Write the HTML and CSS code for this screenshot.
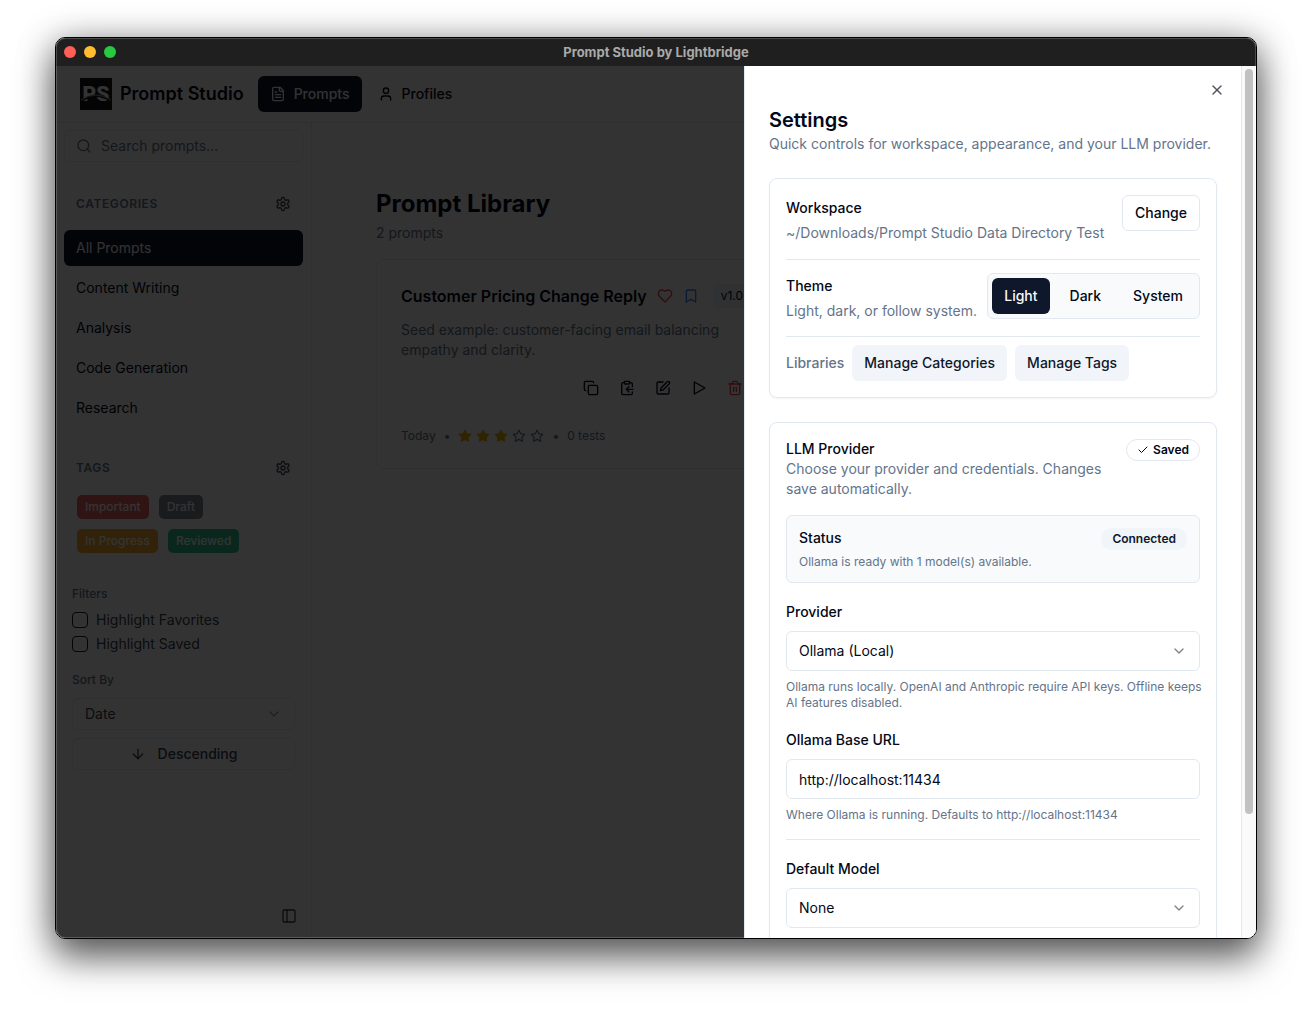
FILE: index.html
```
<!DOCTYPE html>
<html lang="en">
<head>
  <meta charset="UTF-8">
  <title>Prompt Studio by Lightbridge</title>
  <link rel="stylesheet" href="styles.css">
</head>
<body>

  <div class="window">
    <div class="titlebar">
      <div class="lights">
        <span class="light red"></span>
        <span class="light yellow"></span>
        <span class="light green"></span>
      </div>
      <div class="window-title">Prompt Studio by Lightbridge</div>
    </div>

    <div class="content">
      <div class="app">
        <header class="header">
          <svg class="logo" viewBox="0 0 32 32">
            <rect width="32" height="32" fill="#181818"/>
            <text x="16" y="23" text-anchor="middle">PS</text>
            <path d="M1 23 Q16 13 31 23" fill="none" stroke="#181818" stroke-width="2"/>
            <path d="M1 22 Q16 12 31 22" fill="none" stroke="#9aa6ad" stroke-width="1"/>
          </svg>
          <h1>Prompt Studio</h1>
          <nav class="nav">
            <button class="nav-btn active">
              <svg class="icon" viewBox="0 0 24 24"><path d="M15 2H6a2 2 0 0 0-2 2v16a2 2 0 0 0 2 2h12a2 2 0 0 0 2-2V7Z"/><path d="M14 2v4a2 2 0 0 0 2 2h4"/><path d="M10 9H8"/><path d="M16 13H8"/><path d="M16 17H8"/></svg>
              Prompts
            </button>
            <button class="nav-btn">
              <svg class="icon" viewBox="0 0 24 24"><path d="M19 21v-2a4 4 0 0 0-4-4H9a4 4 0 0 0-4 4v2"/><circle cx="12" cy="7" r="4"/></svg>
              Profiles
            </button>
          </nav>
        </header>

        <div class="columns">
          <aside class="sidebar">
            <label class="search">
              <svg class="icon" viewBox="0 0 24 24"><circle cx="11" cy="11" r="8"/><path d="m21 21-4.3-4.3"/></svg>
              <input type="text" placeholder="Search prompts..." aria-label="Search prompts">
            </label>

            <div class="side-head">
              <h2>Categories</h2>
              <button class="gear" aria-label="Manage categories">
                <svg class="icon" viewBox="0 0 24 24"><path d="M12.22 2h-.44a2 2 0 0 0-2 2v.18a2 2 0 0 1-1 1.73l-.43.25a2 2 0 0 1-2 0l-.15-.08a2 2 0 0 0-2.73.73l-.22.38a2 2 0 0 0 .73 2.73l.15.1a2 2 0 0 1 1 1.72v.51a2 2 0 0 1-1 1.74l-.15.09a2 2 0 0 0-.73 2.73l.22.38a2 2 0 0 0 2.73.73l.15-.08a2 2 0 0 1 2 0l.43.25a2 2 0 0 1 1 1.73V20a2 2 0 0 0 2 2h.44a2 2 0 0 0 2-2v-.18a2 2 0 0 1 1-1.73l.43-.25a2 2 0 0 1 2 0l.15.08a2 2 0 0 0 2.73-.73l.22-.39a2 2 0 0 0-.73-2.73l-.15-.08a2 2 0 0 1-1-1.74v-.5a2 2 0 0 1 1-1.74l.15-.09a2 2 0 0 0 .73-2.73l-.22-.38a2 2 0 0 0-2.73-.73l-.15.08a2 2 0 0 1-2 0l-.43-.25a2 2 0 0 1-1-1.73V4a2 2 0 0 0-2-2z"/><circle cx="12" cy="12" r="3"/></svg>
              </button>
            </div>
            <div class="categories">
              <button class="category active">All Prompts</button>
              <button class="category">Content Writing</button>
              <button class="category">Analysis</button>
              <button class="category">Code Generation</button>
              <button class="category">Research</button>
            </div>

            <div class="side-head">
              <h2>Tags</h2>
              <button class="gear" aria-label="Manage tags">
                <svg class="icon" viewBox="0 0 24 24"><path d="M12.22 2h-.44a2 2 0 0 0-2 2v.18a2 2 0 0 1-1 1.73l-.43.25a2 2 0 0 1-2 0l-.15-.08a2 2 0 0 0-2.73.73l-.22.38a2 2 0 0 0 .73 2.73l.15.1a2 2 0 0 1 1 1.72v.51a2 2 0 0 1-1 1.74l-.15.09a2 2 0 0 0-.73 2.73l.22.38a2 2 0 0 0 2.73.73l.15-.08a2 2 0 0 1 2 0l.43.25a2 2 0 0 1 1 1.73V20a2 2 0 0 0 2 2h.44a2 2 0 0 0 2-2v-.18a2 2 0 0 1 1-1.73l.43-.25a2 2 0 0 1 2 0l.15.08a2 2 0 0 0 2.73-.73l.22-.39a2 2 0 0 0-.73-2.73l-.15-.08a2 2 0 0 1-1-1.74v-.5a2 2 0 0 1 1-1.74l.15-.09a2 2 0 0 0 .73-2.73l-.22-.38a2 2 0 0 0-2.73-.73l-.15.08a2 2 0 0 1-2 0l-.43-.25a2 2 0 0 1-1-1.73V4a2 2 0 0 0-2-2z"/><circle cx="12" cy="12" r="3"/></svg>
              </button>
            </div>
            <div class="tags">
              <button class="tag tag-red">Important</button>
              <button class="tag tag-gray">Draft</button>
              <button class="tag tag-amber">In Progress</button>
              <button class="tag tag-green">Reviewed</button>
            </div>

            <div class="filters">
              <h3>Filters</h3>
              <label class="check"><input type="checkbox"> Highlight Favorites</label>
              <label class="check"><input type="checkbox"> Highlight Saved</label>
            </div>

            <div class="sort">
              <label class="small-label" for="sort">Sort By</label>
              <div class="select small">
                <select id="sort"><option>Date</option></select>
                <svg class="icon" viewBox="0 0 24 24"><path d="m6 9 6 6 6-6"/></svg>
              </div>
              <button class="order">
                <svg class="icon" viewBox="0 0 24 24"><path d="M12 5v14"/><path d="m19 12-7 7-7-7"/></svg>
                Descending
              </button>
            </div>

            <button class="collapse" aria-label="Collapse sidebar">
              <svg class="icon" viewBox="0 0 24 24"><rect width="18" height="18" x="3" y="3" rx="2"/><path d="M9 3v18"/></svg>
            </button>
          </aside>

          <main class="main">
            <h2>Prompt Library</h2>
            <p class="count">2 prompts</p>
            <div class="cards">
              <article class="prompt">
                <div class="prompt-head">
                  <h3>Customer Pricing Change Reply</h3>
                  <svg class="icon heart" viewBox="0 0 24 24"><path d="M19 14c1.49-1.46 3-3.21 3-5.5A5.5 5.5 0 0 0 16.5 3c-1.76 0-3 .5-4.5 2-1.5-1.5-2.74-2-4.5-2A5.5 5.5 0 0 0 2 8.5c0 2.3 1.5 4.05 3 5.5l7 7Z"/></svg>
                  <svg class="icon bookmark" viewBox="0 0 24 24"><path d="m19 21-7-4-7 4V5a2 2 0 0 1 2-2h10a2 2 0 0 1 2 2v16z"/></svg>
                  <span class="version">v1.0</span>
                </div>
                <p class="desc">Seed example: customer-facing email balancing empathy and clarity.</p>
                <div class="actions">
                  <button aria-label="Copy"><svg class="icon" viewBox="0 0 24 24"><rect width="14" height="14" x="8" y="8" rx="2"/><path d="M4 16c-1.1 0-2-.9-2-2V4c0-1.1.9-2 2-2h10c1.1 0 2 .9 2 2"/></svg></button>
                  <button aria-label="Paste"><svg class="icon" viewBox="0 0 24 24"><rect width="8" height="4" x="8" y="2" rx="1"/><path d="M8 4H6a2 2 0 0 0-2 2v14a2 2 0 0 0 2 2h12a2 2 0 0 0 2-2v-2"/><path d="M16 4h2a2 2 0 0 1 2 2v4"/><path d="M21 14H11"/><path d="m15 10-4 4 4 4"/></svg></button>
                  <button aria-label="Edit"><svg class="icon" viewBox="0 0 24 24"><path d="M12 3H5a2 2 0 0 0-2 2v14a2 2 0 0 0 2 2h14a2 2 0 0 0 2-2v-7"/><path d="M18.375 2.625a2.121 2.121 0 1 1 3 3L12 15l-4 1 1-4Z"/></svg></button>
                  <button aria-label="Run"><svg class="icon" viewBox="0 0 24 24"><path d="M5 3l16 9-16 9Z"/></svg></button>
                  <button class="delete" aria-label="Delete"><svg class="icon" viewBox="0 0 24 24"><path d="M3 6h18"/><path d="M19 6v14c0 1-1 2-2 2H7c-1 0-2-1-2-2V6"/><path d="M8 6V4c0-1 1-2 2-2h4c1 0 2 1 2 2v2"/><path d="M10 11v6"/><path d="M14 11v6"/></svg></button>
                </div>
                <div class="meta">
                  <span>Today</span>
                  <span>•</span>
                  <span class="stars">
                    <svg class="star on" viewBox="0 0 24 24"><path d="M12 2l3.09 6.26L22 9.27l-5 4.87 1.18 6.88L12 17.77l-6.18 3.25L7 14.14 2 9.27l6.91-1.01z"/></svg>
                    <svg class="star on" viewBox="0 0 24 24"><path d="M12 2l3.09 6.26L22 9.27l-5 4.87 1.18 6.88L12 17.77l-6.18 3.25L7 14.14 2 9.27l6.91-1.01z"/></svg>
                    <svg class="star on" viewBox="0 0 24 24"><path d="M12 2l3.09 6.26L22 9.27l-5 4.87 1.18 6.88L12 17.77l-6.18 3.25L7 14.14 2 9.27l6.91-1.01z"/></svg>
                    <svg class="star" viewBox="0 0 24 24"><path d="M12 2l3.09 6.26L22 9.27l-5 4.87 1.18 6.88L12 17.77l-6.18 3.25L7 14.14 2 9.27l6.91-1.01z"/></svg>
                    <svg class="star" viewBox="0 0 24 24"><path d="M12 2l3.09 6.26L22 9.27l-5 4.87 1.18 6.88L12 17.77l-6.18 3.25L7 14.14 2 9.27l6.91-1.01z"/></svg>
                  </span>
                  <span>•</span>
                  <span>0 tests</span>
                </div>
              </article>
            </div>
          </main>
        </div>
      </div>

      <div class="overlay"></div>

      <section class="sheet" role="dialog" aria-labelledby="settings-title">
        <div class="sheet-body">
          <button class="close" aria-label="Close">
            <svg class="icon" viewBox="0 0 24 24"><path d="M18 6 6 18"/><path d="m6 6 12 12"/></svg>
          </button>
          <h2 id="settings-title">Settings</h2>
          <p class="muted">Quick controls for workspace, appearance, and your LLM provider.</p>

          <div class="panel general">
            <div class="row workspace">
              <div class="stack">
                <h3>Workspace</h3>
                <p class="muted">~/Downloads/Prompt Studio Data Directory Test</p>
              </div>
              <button class="btn outline">Change</button>
            </div>
            <div class="row theme">
              <div class="stack">
                <h3>Theme</h3>
                <p class="muted">Light, dark, or follow system.</p>
              </div>
              <div class="segment">
                <button class="btn primary">Light</button>
                <button class="btn">Dark</button>
                <button class="btn">System</button>
              </div>
            </div>
            <div class="libraries">
              <span class="muted medium">Libraries</span>
              <button class="btn secondary">Manage Categories</button>
              <button class="btn secondary">Manage Tags</button>
            </div>
          </div>

          <div class="panel provider">
            <div class="row">
              <div>
                <h3>LLM Provider</h3>
                <p class="muted">Choose your provider and credentials. Changes save automatically.</p>
              </div>
              <span class="badge saved">
                <svg class="icon" viewBox="0 0 24 24"><path d="M20 6 9 17l-5-5"/></svg>
                Saved
              </span>
            </div>

            <div class="status">
              <div class="row">
                <h3>Status</h3>
                <span class="badge connected">Connected</span>
              </div>
              <p class="hint">Ollama is ready with 1 model(s) available.</p>
            </div>

            <div class="field">
              <label for="provider">Provider</label>
              <div class="select">
                <select id="provider"><option>Ollama (Local)</option></select>
                <svg class="icon" viewBox="0 0 24 24"><path d="m6 9 6 6 6-6"/></svg>
              </div>
              <p class="hint one-line">Ollama runs locally. OpenAI and Anthropic require API keys. Offline keeps<br>AI features disabled.</p>
            </div>

            <div class="field">
              <label for="base-url">Ollama Base URL</label>
              <input type="text" id="base-url" value="http://localhost:11434">
              <p class="hint">Where Ollama is running. Defaults to http://localhost:11434</p>
            </div>

            <div class="field model">
              <label for="model">Default Model</label>
              <div class="select">
                <select id="model"><option>None</option></select>
                <svg class="icon" viewBox="0 0 24 24"><path d="m6 9 6 6 6-6"/></svg>
              </div>
            </div>
          </div>
        </div>
        <div class="scrollbar"><div class="thumb"></div></div>
      </section>
    </div>
  </div>

</body>
</html>
```

FILE: styles.css
```
* { box-sizing: border-box; margin: 0; }
body {
  height: 100vh;
  padding: 37px 55px 73px;
  display: flex;
  overflow: hidden;
  background: #fff;
  color: #020817;
  font: 14px/20px Inter, "Liberation Sans", sans-serif;
}
button, input, select { font: inherit; color: inherit; background: none; border: 0; padding: 0; }
h3 { font-size: 14px; font-weight: 500; }

.icon { width: 16px; height: 16px; flex: none; fill: none; stroke: currentColor; stroke-width: 2; stroke-linecap: round; stroke-linejoin: round; }

/* window frame */
.window {
  flex: 1;
  min-width: 0;
  position: relative;
  display: flex;
  flex-direction: column;
  border: 1px solid #000;
  border-radius: 10px;
  overflow: hidden;
  box-shadow: 0 20px 36px rgba(0, 0, 0, .5), 0 4px 36px rgba(0, 0, 0, .4);
}
.window::after { content: ""; position: absolute; inset: 0; border-radius: 9px; box-shadow: inset 0 0 0 1px rgba(255, 255, 255, .2); pointer-events: none; }
.titlebar { height: 28px; display: grid; grid-template-columns: 1fr auto 1fr; align-items: center; padding: 0 8px; background: #1f1f1f; }
.lights { display: flex; gap: 8px; }
.light { width: 12px; height: 12px; border-radius: 50%; }
.red { background: #ff5f57; }
.yellow { background: #febc2e; }
.green { background: #28c840; }
.window-title { color: #a9a9a9; font-size: 13px; font-weight: 700; }
.content { flex: 1; min-height: 0; position: relative; }
.app { height: 100%; display: flex; flex-direction: column; overflow: hidden; }

/* header */
.header { display: flex; align-items: center; gap: 8px; padding: 10px 24px; border-bottom: 1px solid #e2e8f0; }
.logo { width: 32px; height: 32px; }
.logo text { font: 900 21px Roboto, sans-serif; fill: #fff; }
.header h1 { font-size: 18px; font-weight: 600; }
.nav { display: flex; gap: 4px; margin-left: 6px; }
.nav-btn { height: 36px; display: flex; align-items: center; gap: 8px; padding: 0 12px; border-radius: 6px; font-weight: 500; }
.active { background: #0f172a; color: #f8fafc; }

/* sidebar */
.columns { flex: 1; min-height: 0; display: flex; }
.sidebar { width: 256px; flex: none; display: flex; flex-direction: column; padding: 7px 8px 8px; border-right: 1px solid #e2e8f0; }
.search { height: 32px; display: flex; align-items: center; gap: 9px; padding: 0 11px; border: 1px solid #e2e8f0; border-radius: 6px; color: #64748b; }
.search input { flex: 1; min-width: 0; }
.search input::placeholder { color: #64748b; opacity: 1; }
.side-head { height: 32px; display: flex; align-items: center; justify-content: space-between; padding: 0 12px; margin: 26px 0 10px; }
.side-head h2 { font-size: 12px; font-weight: 600; letter-spacing: 0.05em; text-transform: uppercase; color: #64748b; }
.gear { display: flex; color: #374151; }
.categories { display: flex; flex-direction: column; gap: 4px; }
.category { height: 36px; padding: 0 12px; border-radius: 6px; text-align: left; }
.tags { display: flex; flex-wrap: wrap; gap: 10px; padding: 1px 13px; }
.tag { height: 24px; padding: 0 8px; border-radius: 5px; color: #fff; font-size: 12px; font-weight: 500; opacity: .85; }
.tag-red { background: #ef4444; }
.tag-gray { background: #6b7280; }
.tag-amber { background: #f59e0b; }
.tag-green { background: #10b981; }
.filters { display: flex; flex-direction: column; gap: 4px; padding: 0 8px; margin-top: 32px; color: #374151; }
.filters h3, .small-label { font-size: 12px; line-height: 16px; font-weight: 500; color: #64748b; }
.filters h3 { margin-bottom: 4px; }
.check { display: flex; align-items: center; gap: 8px; }
.check input { appearance: none; width: 16px; height: 16px; border: 1px solid #0f172a; border-radius: 4px; }
.sort { display: flex; flex-direction: column; gap: 8px; padding: 0 8px; margin-top: 18px; color: #374151; }
.small-label { margin-bottom: 2px; }
.order { height: 32px; display: flex; align-items: center; justify-content: center; gap: 12px; border: 1px solid #e2e8f0; border-radius: 6px; font-weight: 500; }
.collapse { align-self: flex-end; display: flex; margin: auto 6px 6px; color: #374151; }

/* prompt library */
.main { flex: 1; min-width: 0; padding: 64px; }
.main h2 { font-size: 24px; line-height: 34px; font-weight: 700; }
.count { margin-top: 2px; color: #64748b; }
.cards { display: grid; grid-template-columns: 1fr 1fr; gap: 16px; margin-top: 16px; }
.prompt { padding: 24px; border: 1px solid #e2e8f0; border-radius: 8px; }
.prompt-head { display: flex; align-items: center; gap: 10px; height: 24px; white-space: nowrap; }
.prompt-head h3 { font-size: 16px; font-weight: 600; }
.heart { color: #ef4444; }
.bookmark { color: #3b82f6; }
.version { margin-left: auto; padding: 2px 8px; border-radius: 4px; background: #f1f5f9; font-size: 12px; }
.desc { margin-top: 12px; color: #64748b; }
.actions { display: flex; justify-content: flex-end; gap: 4px; margin-top: 12px; }
.actions button { width: 32px; height: 32px; display: grid; place-items: center; }
.actions .delete { color: #ef4444; }
.meta { display: flex; align-items: center; gap: 8px; margin-top: 24px; font-size: 12px; line-height: 16px; color: #64748b; }
.stars { display: flex; gap: 4px; }
.star { width: 14px; height: 14px; fill: none; stroke: #64748b; stroke-width: 2; stroke-linejoin: round; }
.star.on { fill: #eab308; stroke: #eab308; }

.overlay { position: absolute; inset: 0; background: rgba(0, 0, 0, .8); }

/* settings sheet */
.sheet { position: absolute; top: 0; right: 0; bottom: 0; width: 512px; max-width: 100%; display: flex; background: #fff; border-left: 1px solid #e2e8f0; }
.sheet-body { flex: 1; min-width: 0; padding: 16px 24px; overflow: hidden; display: flex; flex-direction: column; }
.sheet-body > * { flex: none; }
.close { align-self: flex-end; display: flex; margin-right: -8px; color: #4e525d; }
.sheet h2 { margin-top: 8px; font-size: 20px; line-height: 28px; font-weight: 600; }
.muted { color: #64748b; }
.medium { font-weight: 500; }
.hint { font-size: 12px; line-height: 16px; color: #64748b; }
.one-line { white-space: nowrap; }
.panel { margin-top: 24px; padding: 16px; border: 1px solid #e2e8f0; border-radius: 8px; box-shadow: 0 1px 2px rgba(0, 0, 0, .05); }
.row { display: flex; justify-content: space-between; align-items: flex-start; gap: 16px; }
.stack { display: flex; flex-direction: column; gap: 5px; padding-top: 3px; white-space: nowrap; }
.workspace { padding-bottom: 16px; }
.theme { gap: 8px; padding: 13px 0 15px; border: solid #e2e8f0; border-width: 1px 0; }
.libraries { display: flex; align-items: center; gap: 8px; padding-top: 8px; }
.btn { height: 36px; padding: 0 12px; border-radius: 6px; font-weight: 500; white-space: nowrap; }
.outline { border: 1px solid #e2e8f0; }
.primary { background: #0f172a; color: #f8fafc; }
.secondary { background: #f1f5f9; color: #0f172a; }
.segment { display: flex; gap: 8px; padding: 4px; border: 1px solid #e2e8f0; border-radius: 6px; background: #f8fafc; }
.badge { height: 22px; display: flex; align-items: center; gap: 4px; padding: 0 10px; border: 1px solid transparent; border-radius: 11px; font-size: 12px; font-weight: 600; }
.badge .icon { width: 12px; height: 12px; }
.saved { border-color: #e2e8f0; }
.connected { background: #f1f5f9; color: #0f172a; }
.status { margin-top: 16px; padding: 12px; border: 1px solid #e2e8f0; border-radius: 6px; background: #f8fafc; }
.status .hint { margin-top: 4px; }
.field { display: flex; flex-direction: column; gap: 8px; margin-top: 19px; }
.field label { padding-bottom: 1px; font-weight: 500; }
.field input { height: 40px; padding: 0 12px; border: 1px solid #e2e8f0; border-radius: 6px; }
.select { display: grid; grid-template-columns: 1fr 42px; align-items: center; color: inherit; }
.select select { grid-area: 1 / 1 / 2 / 3; height: 40px; padding: 0 12px; appearance: none; border: 1px solid #e2e8f0; border-radius: 6px; }
.select .icon { grid-area: 1 / 2; justify-self: center; opacity: .5; pointer-events: none; }
.select.small select { height: 32px; }
.model { padding-top: 19px; margin-top: 16px; border-top: 1px solid #e2e8f0; }
.scrollbar { width: 15px; padding: 3px; border-left: 1px solid #e8e8e8; background: #fafafa; }
.thumb { width: 8px; height: 86%; border-radius: 4px; background: #c1c1c1; }
```
